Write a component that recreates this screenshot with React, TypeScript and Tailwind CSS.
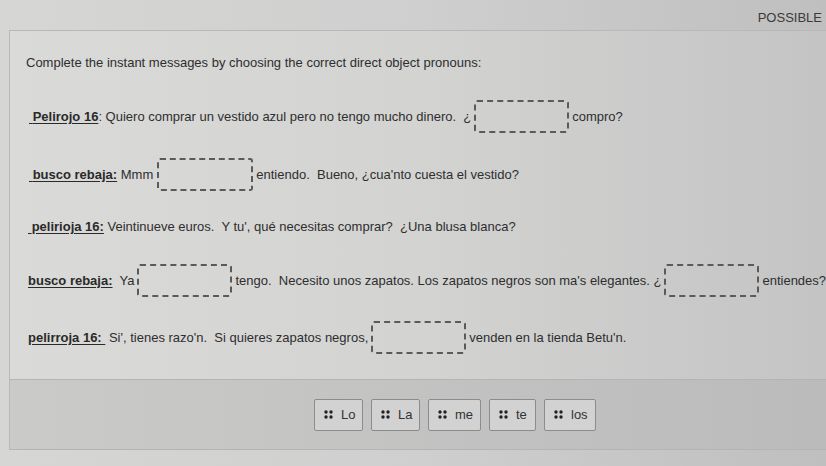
import React from "react";

const Box = () => (
  <span className="inline-block mx-[3px] w-[95px] h-[33px] border-2 border-dashed border-[#5a5a5a] rounded-[3px] shrink-0" />
);

const Label = ({ children }: { children: React.ReactNode }) => (
  <span className="font-bold underline underline-offset-[2px] text-[#2a2a2a]">{children}</span>
);

const Dots = () => (
  <svg width="9" height="9" viewBox="0 0 9 9" className="shrink-0">
    <circle cx="2" cy="2" r="1.7" fill="#222" />
    <circle cx="7" cy="2" r="1.7" fill="#222" />
    <circle cx="2" cy="7" r="1.7" fill="#222" />
    <circle cx="7" cy="7" r="1.7" fill="#222" />
  </svg>
);

const Chip = ({ text, w }: { text: string; w: string }) => (
  <div className={`flex items-center gap-[8px] h-[32px] pl-[9px] border border-[#8c8c8c] bg-[#d2d2d2] rounded-[2px] text-[13px] text-[#333] ${w}`}>
    <Dots />
    <span>{text}</span>
  </div>
);

export default function App() {
  return (
    <div
      className="w-[826px] h-[466px] overflow-hidden bg-gradient-to-r from-[#d6d6d4] via-[#cfcfcf] to-[#bfbfbf] text-[#2e2e2e] text-[13px] leading-[16px]"
      style={{ fontFamily: '"Liberation Sans", Arial, Helvetica, sans-serif' }}
    >
      <div className="h-[30px] flex items-center justify-end pr-[4px] pt-[6px]">
        <span className="text-[13px] text-[#3a3a3a]">POSSIBLE</span>
      </div>
      <div className="ml-[9px] border-t border-l border-[#b8b8b8] bg-gradient-to-r from-[#dadad8] via-[#d3d3d2] to-[#c4c4c4]">
        <div className="pl-[16px] pt-[24px] whitespace-nowrap">
          <div className="h-[16px]">Complete the instant messages by choosing the correct direct object pronouns:</div>

          <div className="mt-[29px] h-[33px] flex items-center pl-[3px]">
            <Label>{"\u00a0"}Pelirojo 16</Label>
            <span>: Quiero comprar un vestido azul pero no tengo mucho dinero.&nbsp;&nbsp;¿</span>
            <Box />
            <span>compro?</span>
          </div>

          <div className="mt-[25px] h-[33px] flex items-center pl-[3px]">
            <Label>{"\u00a0"}busco rebaja:</Label>
            <span>&nbsp;Mmm</span>
            <span className="inline-block ml-[4px] mr-[3px] w-[96px] h-[33px] border-2 border-dashed border-[#5a5a5a] rounded-[3px] shrink-0" />
            <span>entiendo.&nbsp; Bueno, ¿cua'nto cuesta el vestido?</span>
          </div>

          <div className="mt-[19px] h-[33px] flex items-center pl-[2px]">
            <Label>{"\u00a0"}pelirioja 16:</Label>
            <span>&nbsp;Veintinueve euros.&nbsp; Y tu', qué necesitas comprar?&nbsp; ¿Una blusa blanca?</span>
          </div>

          <div className="mt-[21px] h-[33px] flex items-center pl-[2px]">
            <Label>busco rebaja:</Label>
            <span>&nbsp; Ya</span>
            <Box />
            <span>tengo.&nbsp; Necesito unos zapatos. Los zapatos negros son ma's elegantes. ¿</span>
            <Box />
            <span>entiendes?</span>
          </div>

          <div className="mt-[24px] h-[33px] flex items-center pl-[2px]">
            <Label>pelirroja 16:&nbsp;</Label>
            <span>&nbsp;Si', tienes razo'n.&nbsp; Si quieres zapatos negros,</span>
            <Box />
            <span>venden en la tienda Betu'n.</span>
          </div>
        </div>

        <div className="mt-[25px] h-[71px] bg-gradient-to-r from-[#cacac9] to-[#bbbbbb] border-y border-[#b4b4b4] flex items-center gap-[8px] pl-[304px]">
          <Chip text="Lo" w="w-[49px]" />
          <Chip text="La" w="w-[49px]" />
          <Chip text="me" w="w-[53px]" />
          <Chip text="te" w="w-[47px]" />
          <Chip text="los" w="w-[52px]" />
        </div>
      </div>
    </div>
  );
}
